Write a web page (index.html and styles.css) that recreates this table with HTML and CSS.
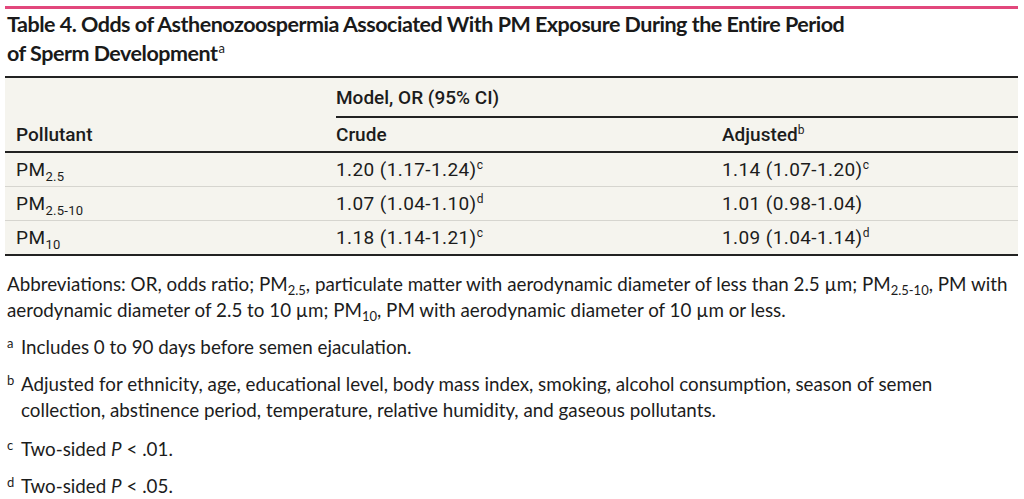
FILE: index.html
```html
<!DOCTYPE html>
<html>
<head>
<meta charset="utf-8">
<link rel="stylesheet" href="styles.css">
</head>
<body>
<div class="page">
  <div class="topbar"></div>
  <h1 class="title">Table 4. Odds of Asthenozoospermia Associated With PM Exposure During the Entire Period of Sperm Development<sup>a</sup></h1>
  <table class="tbl">
    <thead>
      <tr class="hrow1">
        <th class="c1"></th>
        <th class="span" colspan="2"><span class="spanlabel">Model, OR (95% CI)</span></th>
      </tr>
      <tr class="hrow2">
        <th class="c1">Pollutant</th>
        <th class="c2">Crude</th>
        <th class="c3">Adjusted<sup>b</sup></th>
      </tr>
    </thead>
    <tbody>
      <tr>
        <td class="c1">PM<sub>2.5</sub></td>
        <td class="c2">1.20 (1.17-1.24)<sup>c</sup></td>
        <td class="c3">1.14 (1.07-1.20)<sup>c</sup></td>
      </tr>
      <tr>
        <td class="c1">PM<sub>2.5-10</sub></td>
        <td class="c2">1.07 (1.04-1.10)<sup>d</sup></td>
        <td class="c3">1.01 (0.98-1.04)</td>
      </tr>
      <tr>
        <td class="c1">PM<sub>10</sub></td>
        <td class="c2">1.18 (1.14-1.21)<sup>c</sup></td>
        <td class="c3">1.09 (1.04-1.14)<sup>d</sup></td>
      </tr>
    </tbody>
  </table>
  <div class="notes">
    <p class="abbr">Abbreviations: OR, odds ratio; PM<sub>2.5</sub>, particulate matter with aerodynamic diameter of less than 2.5 µm; PM<sub>2.5-10</sub>, PM with aerodynamic diameter of 2.5 to 10 µm; PM<sub>10</sub>, PM with aerodynamic diameter of 10 µm or less.</p>
    <p class="fn"><span class="mark">a</span><span>Includes 0 to 90 days before semen ejaculation.</span></p>
    <p class="fn fn-b"><span class="mark">b</span><span>Adjusted for ethnicity, age, educational level, body mass index, smoking, alcohol consumption, season of semen collection, abstinence period, temperature, relative humidity, and gaseous pollutants.</span></p>
    <p class="fn"><span class="mark">c</span><span>Two-sided <i>P</i> &lt; .01.</span></p>
    <p class="fn"><span class="mark">d</span><span>Two-sided <i>P</i> &lt; .05.</span></p>
  </div>
</div>
</body>
</html>
```

FILE: styles.css
```css
html, body {
  margin: 0;
  padding: 0;
  background: #ffffff;
}
.page {
  padding: 6px 6px 0 5px;
  color: #1c1c1c;
  font-family: Lato, "Open Sans", sans-serif;
}
.topbar {
  height: 3px;
  background: #e2477c;
}
.title {
  margin: 0;
  max-width: 848px;
  padding: 1px 0 8px 2px;
  font-size: 21.5px;
  line-height: 29px;
  letter-spacing: -0.5px;
  font-weight: 700;
  color: #1a1a1a;
}
.title sup {
  font-size: 13px;
  line-height: 0;
  vertical-align: 8px;
  font-weight: 400;
  letter-spacing: 0;
  margin-left: 1px;
}
.tbl {
  width: 100%;
  border-collapse: collapse;
  background: #f5f4ee;
  border-top: 2px solid #222;
  border-bottom: 2px solid #222;
  font-family: Roboto, sans-serif;
  font-size: 19px;
  color: #1c1c1c;
}
.tbl th, .tbl td {
  text-align: left;
  padding: 0;
  vertical-align: middle;
}
.tbl th {
  font-weight: 500;
}
.tbl td {
  letter-spacing: 0.4px;
}
.c1 { width: 320px; padding-left: 11px !important; }
.c2 { width: 386px; }
.hrow1 th { height: 38px; }
.hrow1 .span { border-bottom: 2px solid #222; }
.hrow2 th { height: 33px; border-bottom: 2px solid #222; }
.tbl tbody td { height: 33px; border-bottom: 1px solid #d6d5cf; }
.tbl tbody tr:last-child td { border-bottom: none; }
.tbl sup {
  font-size: 12px;
  line-height: 0;
  vertical-align: 7px;
  font-weight: 400;
  letter-spacing: 0;
}
.tbl sub {
  font-size: 13px;
  line-height: 0;
  vertical-align: -5px;
  letter-spacing: 0.3px;
}
.notes {
  padding: 15px 0 0 2px;
  font-size: 18.8px;
  line-height: 26px;
  color: #1c1c1c;
}
.notes p {
  margin: 0 0 11px 0;
}
.notes .fn-b {
  margin-bottom: 13px;
}
.notes sub {
  font-size: 13px;
  line-height: 0;
  vertical-align: -4px;
}
.fn {
  display: flex;
}
.fn .mark {
  flex: none;
  width: 14px;
  font-size: 13px;
  line-height: 18px;
}
```
